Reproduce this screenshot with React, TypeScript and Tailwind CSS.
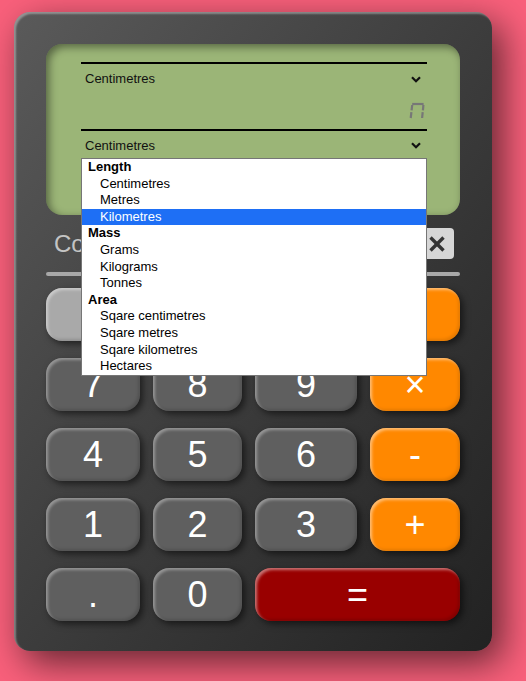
import React from "react";

const btnBase =
  "flex items-center justify-center rounded-[16px] text-white text-[36px] leading-none select-none";
const grayBtn =
  btnBase +
  " bg-[#5f5f5f] shadow-[inset_2px_2px_3px_rgba(255,255,255,0.35),inset_-2px_-2px_3px_rgba(0,0,0,0.15),3px_3px_7px_rgba(0,0,0,0.55)]";
const lightBtn =
  btnBase +
  " bg-[#a9a9a9] shadow-[inset_2px_2px_3px_rgba(255,255,255,0.4),inset_-2px_-2px_3px_rgba(0,0,0,0.15),3px_3px_7px_rgba(0,0,0,0.55)]";
const orangeBtn =
  btnBase +
  " bg-[#ff8800] text-[32px] shadow-[inset_2px_2px_3px_rgba(255,255,255,0.45),inset_-2px_-2px_3px_rgba(0,0,0,0.1),3px_3px_7px_rgba(0,0,0,0.55)]";
const redBtn =
  btnBase +
  " bg-[#990000] text-[32px] shadow-[inset_2px_2px_3px_rgba(255,255,255,0.45),inset_-2px_-2px_3px_rgba(0,0,0,0.15),3px_3px_7px_rgba(0,0,0,0.55)]";

function Chevron() {
  return (
    <svg width="10" height="7" viewBox="0 0 10 7" className="mr-[6px]">
      <polyline points="1,1.2 5,5.2 9,1.2" fill="none" stroke="#111" strokeWidth="2.2" />
    </svg>
  );
}

function SegZero() {
  return (
    <svg width="16" height="18" viewBox="0 0 16 18">
      <g stroke="#777777" strokeWidth="2.2" strokeLinecap="butt" fill="none">
        <line x1="3.2" y1="2" x2="14.6" y2="2" />
        <line x1="3.2" y1="3" x2="2.6" y2="8.3" />
        <line x1="2.4" y1="10.2" x2="1.7" y2="16" />
        <line x1="14.4" y1="3" x2="13.9" y2="8.3" />
        <line x1="13.7" y1="10.2" x2="13.1" y2="16" />
      </g>
    </svg>
  );
}

const groups: { label: string; items: string[] }[] = [
  { label: "Length", items: ["Centimetres", "Metres", "Kilometres"] },
  { label: "Mass", items: ["Grams", "Kilograms", "Tonnes"] },
  { label: "Area", items: ["Sqare centimetres", "Sqare metres", "Sqare kilometres", "Hectares"] },
];

export default function App() {
  return (
    <div
      className="w-[526px] h-[681px] overflow-hidden bg-[#f9607b] pt-[12px] pl-[14px]"
      style={{ fontFamily: '"Liberation Sans", Arial, sans-serif' }}
    >
      <div className="w-[478px] h-[639px] rounded-[16px] bg-gradient-to-br from-[#5a5a5a] to-[#222222] p-[32px] pb-0 shadow-[inset_2px_2px_2px_rgba(255,255,255,0.35),10px_12px_36px_rgba(0,0,0,0.6)]">
        {/* Display */}
        <div className="relative z-10 h-[171px] rounded-[16px] bg-[#9bb577] pt-[18px] pl-[35px] pr-[33px] shadow-[inset_3px_3px_9px_rgba(0,0,0,0.45)]">
          <div className="h-[30px] pt-[2px] border-t-2 border-black flex items-center justify-between">
            <span className="pl-[4px] text-[13px] text-[#111]">Centimetres</span>
            <Chevron />
          </div>
          <div className="h-[37px] flex items-center justify-end pr-[2px]">
            <SegZero />
          </div>
          <div className="relative h-[29px] pt-[2px] border-t-2 border-black flex items-center justify-between">
            <span className="pl-[4px] text-[13px] text-[#111]">Centimetres</span>
            <Chevron />
            <div className="absolute left-0 top-full w-full z-20 bg-white border border-[#767676] text-[13px] leading-[16.6px] text-black">
              {groups.map((g) => (
                <div key={g.label}>
                  <div className="pl-[6px] font-bold">{g.label}</div>
                  {g.items.map((it) => (
                    <div
                      key={it}
                      className={
                        it === "Kilometres"
                          ? "pl-[18px] bg-[#1e6ff5] text-white"
                          : "pl-[18px]"
                      }
                    >
                      {it}
                    </div>
                  ))}
                </div>
              ))}
            </div>
          </div>
        </div>

        {/* Header row */}
        <div className="mt-[13px] h-[31px] flex items-center justify-between">
          <span className="pl-[8px] text-[24px] text-[#c4c4c4]">Co</span>
          <div className="mr-[6px] w-[35px] h-[31px] rounded-[4px] bg-[#d6d6d6] flex items-center justify-center">
            <svg width="18" height="18" viewBox="0 0 18 18">
              <g stroke="#333" strokeWidth="3.4" strokeLinecap="butt">
                <line x1="2.5" y1="2.5" x2="15.5" y2="15.5" />
                <line x1="15.5" y1="2.5" x2="2.5" y2="15.5" />
              </g>
            </svg>
          </div>
        </div>

        <div className="mt-[13px] h-[4px] rounded-full bg-[#a8a8a8]" />

        {/* Keys */}
        <div className="mt-[12px] grid grid-cols-[94px_89px_102px_90px] gap-x-[13px] gap-y-[17px] auto-rows-[53px]">
          <div className={lightBtn}></div>
          <div className={grayBtn}></div>
          <div className={grayBtn}></div>
          <div className={orangeBtn}></div>

          <div className={grayBtn}>7</div>
          <div className={grayBtn}>8</div>
          <div className={grayBtn}>9</div>
          <div className={orangeBtn}>×</div>

          <div className={grayBtn}>4</div>
          <div className={grayBtn}>5</div>
          <div className={grayBtn}>6</div>
          <div className={orangeBtn}>-</div>

          <div className={grayBtn}>1</div>
          <div className={grayBtn}>2</div>
          <div className={grayBtn}>3</div>
          <div className={orangeBtn}>+</div>

          <div className={grayBtn}>.</div>
          <div className={grayBtn}>0</div>
          <div className={redBtn + " col-span-2"}>=</div>
        </div>
      </div>
    </div>
  );
}
